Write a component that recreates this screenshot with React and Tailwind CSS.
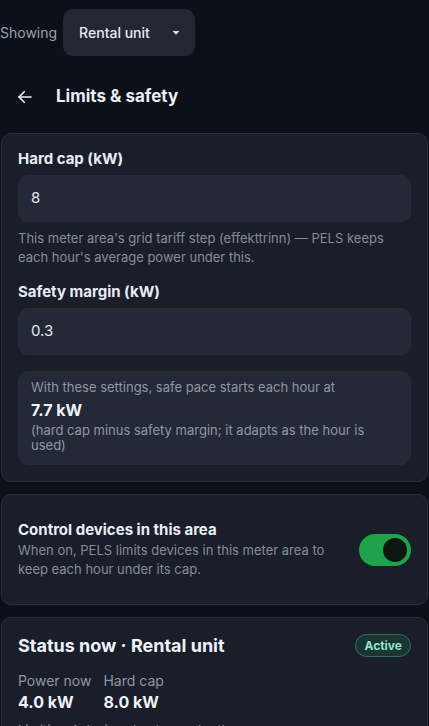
import { useState } from 'react'

function Field({ label, value, help }) {
  return (
    <div className="flex flex-col">
      <label className="text-[15px] font-bold text-[#e8edf5] leading-[20px]">{label}</label>
      <div className="mt-[6px] h-[47px] rounded-[10px] bg-[#232936] border border-[#262c38] flex items-center px-[12px] text-[15px] text-[#e3e7ee]">
        {value}
      </div>
      {help && <p className="mt-[7px] text-[13px] leading-[19px] text-[#858d9b]">{help}</p>}
    </div>
  )
}

function Toggle() {
  const [on, setOn] = useState(true)
  return (
    <button
      type="button"
      onClick={() => setOn(!on)}
      className={`shrink-0 w-[52px] h-[32px] rounded-full flex items-center px-[4px] ${on ? 'bg-[#1fa34a] justify-end' : 'bg-[#3a4150] justify-start'}`}
    >
      <span className="w-[24px] h-[24px] rounded-full bg-[#0d1610]" />
    </button>
  )
}

export default function App() {
  return (
    <div className="min-h-[726px] bg-[#0c1019] text-[#e8edf5] font-['Inter','Liberation_Sans',sans-serif] pb-4">
      <div className="flex items-center gap-[6px] pt-[9px]">
        <span className="text-[14px] text-[#9aa1ad]">Showing</span>
        <button type="button" className="h-[47px] w-[132px] rounded-[10px] bg-[#222733] flex items-center pl-[16px] pr-[14px] justify-between text-[14px] font-medium text-[#e8ecf2]">
          Rental unit
          <svg width="10" height="6" viewBox="0 0 10 6"><path d="M1.5 1h7L5 4.8z" fill="#d9dde4" /></svg>
        </button>
      </div>

      <div className="flex items-center mt-[27px] h-[28px] pl-[16px]">
        <svg width="18" height="18" viewBox="0 0 24 24" fill="none" stroke="#eef1f6" strokeWidth="2.2" strokeLinecap="round" strokeLinejoin="round">
          <path d="M20 12H4" />
          <path d="M11 5l-7 7 7 7" />
        </svg>
        <h1 className="ml-[22px] text-[17px] font-bold text-[#e9eef6]">Limits &amp; safety</h1>
      </div>

      <div className="mt-[22px] mx-[1px] rounded-[10px] bg-[#191e29] border border-[#2a303b] px-[16px] pt-[15px] pb-[16px] flex flex-col">
        <Field
          label="Hard cap (kW)"
          value="8"
          help="This meter area's grid tariff step (effekttrinn) — PELS keeps each hour's average power under this."
        />
        <div className="mt-[15px]">
          <Field label="Safety margin (kW)" value="0.3" />
        </div>
        <div className="mt-[16px] rounded-[10px] bg-[#232936] border border-[#262c38] px-[12px] pt-[6px] pb-[11px]">
          <p className="text-[13px] leading-[19px] text-[#8f97a4]">With these settings, safe pace starts each hour at</p>
          <p className="mt-[2px] text-[16px] font-bold leading-[22px] text-[#eef2f8]">7.7 kW</p>
          <p className="mt-[2px] text-[13px] leading-[15px] text-[#8f97a4]">(hard cap minus safety margin; it adapts as the hour is used)</p>
        </div>
      </div>

      <div className="mt-[12px] mx-[1px] rounded-[10px] bg-[#191e29] border border-[#2a303b] px-[16px] pt-[25px] pb-[25px] flex items-center gap-[12px]">
        <div className="flex-1">
          <p className="text-[15px] font-bold leading-[20px] text-[#e9eef6]">Control devices in this area</p>
          <p className="mt-[1px] text-[13px] leading-[19px] text-[#858d9b]">When on, PELS limits devices in this meter area to keep each hour under its cap.</p>
        </div>
        <Toggle />
      </div>

      <div className="mt-[12px] mx-[1px] rounded-[10px] bg-[#191e29] border border-[#2a303b] px-[16px] pt-[15px] pb-[16px]">
        <div className="flex items-start justify-between">
          <h2 className="text-[18px] font-bold leading-[26px] text-[#eef2f8]">Status now · Rental unit</h2>
          <span className="mt-[1px] h-[23px] px-[8px] rounded-full border border-[#2f6f60] bg-[#1b3533] text-[12px] font-bold text-[#8fe6c4] flex items-center">Active</span>
        </div>
        <div className="mt-[12px] flex gap-[12px]">
          <div>
            <p className="text-[14px] leading-[20px] text-[#8f97a4]">Power now</p>
            <p className="text-[16px] font-bold leading-[22px] text-[#eef2f8]">4.0 kW</p>
          </div>
          <div>
            <p className="text-[14px] leading-[20px] text-[#8f97a4]">Hard cap</p>
            <p className="text-[16px] font-bold leading-[22px] text-[#eef2f8]">8.0 kW</p>
          </div>
        </div>
        <p className="mt-[8px] text-[13px] leading-[19px] text-[#858d9b]">Limiting 4 devices to stay under the cap.</p>
      </div>
    </div>
  )
}
